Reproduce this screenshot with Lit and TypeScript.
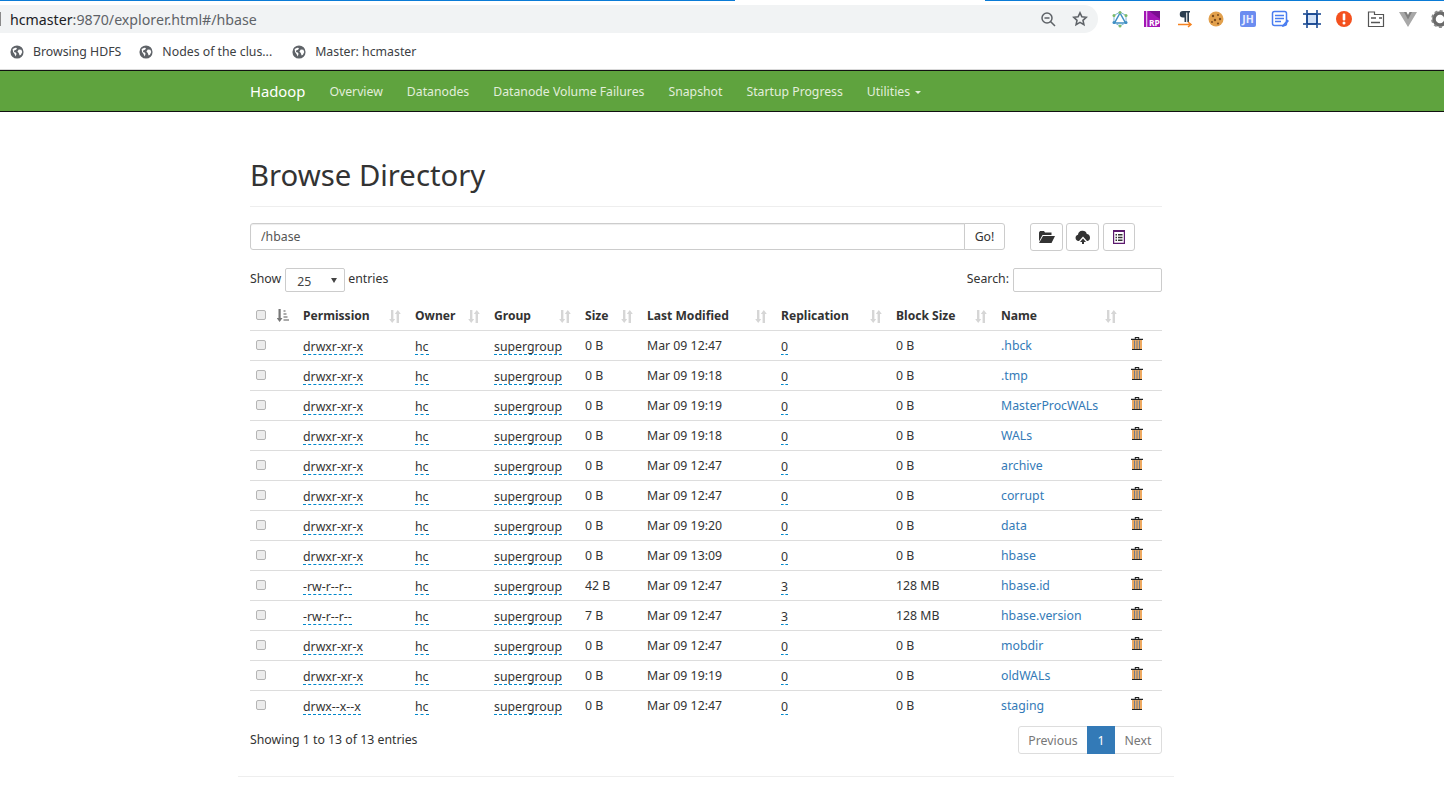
import { LitElement, html, css } from "lit";
import { customElement } from "lit/decorators.js";

type Row = [string, string, string, string, string, string];
const rows: Row[] = [
  ["drwxr-xr-x", "0 B", "Mar 09 12:47", "0", "0 B", ".hbck"],
  ["drwxr-xr-x", "0 B", "Mar 09 19:18", "0", "0 B", ".tmp"],
  ["drwxr-xr-x", "0 B", "Mar 09 19:19", "0", "0 B", "MasterProcWALs"],
  ["drwxr-xr-x", "0 B", "Mar 09 19:18", "0", "0 B", "WALs"],
  ["drwxr-xr-x", "0 B", "Mar 09 12:47", "0", "0 B", "archive"],
  ["drwxr-xr-x", "0 B", "Mar 09 12:47", "0", "0 B", "corrupt"],
  ["drwxr-xr-x", "0 B", "Mar 09 19:20", "0", "0 B", "data"],
  ["drwxr-xr-x", "0 B", "Mar 09 13:09", "0", "0 B", "hbase"],
  ["-rw-r--r--", "42 B", "Mar 09 12:47", "3", "128 MB", "hbase.id"],
  ["-rw-r--r--", "7 B", "Mar 09 12:47", "3", "128 MB", "hbase.version"],
  ["drwxr-xr-x", "0 B", "Mar 09 12:47", "0", "0 B", "mobdir"],
  ["drwxr-xr-x", "0 B", "Mar 09 19:19", "0", "0 B", "oldWALs"],
  ["drwx--x--x", "0 B", "Mar 09 12:47", "0", "0 B", "staging"],
];
const cols = [
  ["Permission", 112],
  ["Owner", 79],
  ["Group", 91],
  ["Size", 62],
  ["Last Modified", 134],
  ["Replication", 115],
  ["Block Size", 105],
  ["Name", 130],
] as [string, number][];

const globe = html`<svg class="globe" viewBox="0 0 16 16"><circle cx="8" cy="8" r="7.500" fill="#5f6368"/><path fill="#fff" d="M3 4.500 6 3l2 .5-1 2-2 .5-.5 2 2 .5 1 1.500-1 3L5 10 3.500 8ZM10 5l3 .5 1 2.500-1.500 3-1.500 1L10 9 8.500 7.500Z"/></svg>`;
const sortIcon = () => html`<svg class="sort" viewBox="0 0 12 13"><path fill="#d6d6d6" d="M2 0h2.400v9H6.200L3.200 13 .2 9H2ZM7.600 13V4H5.800l3-4 3 4H10v9Z"/></svg>`;
const trash = html`<svg class="trash" viewBox="0 0 12 13"><path fill="#eeaa62" d="M1 3h10v9H1Z"/><path fill="#6f7c8c" d="M3 3.500h1V12H3ZM5.500 3.500h1V12h-1ZM8 3.500h1V12H8Z"/><path fill="#222" d="M0 1.800h12V3H0ZM3.800 0h4.400v1.800H7.200V.9H4.800v.9H3.800ZM1 12h10v1H1Z"/></svg>`;

@customElement("app-root")
export class AppRoot extends LitElement {
  static styles = css`
    :host { display: block; position: relative; height: 793px; overflow: hidden; background: #fff; color: #333; font: 12.300px "Noto Sans", "Open Sans", sans-serif; }
    * { box-sizing: border-box; }
    .top { height: 5px; background: linear-gradient(90deg, #0a7bd6 735px, transparent 735px, transparent 985px, #0a7bd6 985px) top / 100% 1px no-repeat; }
    .omni { height: 28px; display: flex; align-items: center; }
    .url { flex: none; width: 1098px; height: 28px; background: #f1f3f4; border-radius: 0 14px 14px 0; display: flex; align-items: center; padding-left: 10px; font-size: 14.200px; color: #5f6368; }
    .url b { font-weight: 400; color: #202124; }
    .caret { position: absolute; left: 0; top: 12px; width: 1px; height: 14px; background: #8a8a8a; }
    .url svg { flex: none; width: 16px; height: 16px; }
    .urltext { flex: 1; }
    .star { margin-left: 16px; margin-right: 10px; }
    .ext { flex: 1; display: flex; gap: 14px; padding-left: 13px; overflow: hidden; }
    .ext svg { flex: none; width: 18px; height: 18px; }
    .bookmarks { height: 37px; display: flex; align-items: center; padding-left: 10px; padding-top: 1px; border-bottom: 1px solid #d9d9d9; font-size: 12.300px; color: #3c4043; }
    .bm { display: flex; align-items: center; gap: 9px; margin-right: 18px; }
    .bm.wide { margin-right: 20px; }
    .globe { width: 14px; height: 14px; }
    .navbar { height: 42px; background: #5fa33e; border-top: 1px solid #111; border-bottom: 1px solid #111; padding-left: 250px; display: flex; align-items: center; color: #e2eedb; font-size: 12.250px; }
    .brand { font-size: 14.800px; color: #fff; margin-right: 24px; }
    .nav { margin-right: 24px; }
    .caretdown { display: inline-block; border: 3px solid transparent; border-top-color: #e2eedb; border-bottom: 0; margin-left: 5px; vertical-align: 2px; }
    .wrap { width: 936px; margin-left: 238px; padding: 0 12px; }
    h1 { margin: 0; height: 95px; padding-top: 43px; border-bottom: 1px solid #eee; font-size: 29.300px; font-weight: 400; line-height: 40px; }
    .path { display: flex; margin-top: 16px; height: 28px; }
    .pathinput { width: 715px; height: 27px; border: 1px solid #ccc; border-radius: 3px 0 0 3px; padding: 0 10px; font: inherit; color: #555; box-shadow: inset 0 1px 1px rgba(0,0,0,.075); }
    .go { width: 41px; height: 27px; margin-left: -1px; background: #fff; border: 1px solid #ccc; border-radius: 0 3px 3px 0; font: inherit; color: #333; padding: 0; }
    .tb { height: 28px; background: #fff; border: 1px solid #ccc; border-radius: 3px; padding: 0; display: flex; align-items: center; justify-content: center; width: 33px; margin-left: 3px; }
    .tb.first { margin-left: 25px; }
    .tb.last { width: 32px; margin-left: 4px; }
    .tb svg { width: 16px; height: 14px; }
    .controls { display: flex; justify-content: space-between; align-items: center; margin-top: 17px; height: 24px; }
    .controls label { display: flex; align-items: center; gap: 3px; padding-bottom: 4px; }
    .select { width: 60px; height: 24px; border: 1px solid #ccc; border-radius: 2px; display: flex; align-items: center; justify-content: space-between; padding: 3px 7px 0 11px; margin: 0 0 -4px 1px; color: #444; background: #fff; }
    .select i { border: 3.500px solid transparent; border-top: 5px solid #444; border-bottom: 0; margin-top: -3px; }
    .search { width: 149px; height: 24px; border: 1px solid #ccc; border-radius: 2px; margin-left: 1px; margin-bottom: -4px; }
    table { border-collapse: collapse; table-layout: fixed; width: 912px; margin-top: 10px; }
    th { height: 28px; font-weight: 700; text-align: left; padding: 0 0 0 8px; position: relative; border-bottom: 1px solid #ddd; font-size: 12.100px; color: #333; }
    td { height: 30px; padding: 0 0 0 8px; border-bottom: 1px solid #ddd; }
    tbody tr:last-child td { border-bottom: 0; }
    th.ck, td.ck { padding-left: 6px; }
    th.sorter { padding-left: 7px; }
    .box { display: block; width: 10px; height: 10px; border: 1px solid #b5b5b5; border-radius: 2px; background: #ececec; margin-top: -2px; }
    td .box { margin-top: 0; }
    th .sort { position: absolute; right: 6px; top: 8px; }
    .sort { display: block; width: 12px; height: 13px; }
    th.sorter .sort { position: static; }
    .ed { display: inline-block; line-height: 15px; vertical-align: -2px; color: #333; border-bottom: 1px dashed #0088cc; }
    .name { color: #337ab7; }
    .trash { display: block; width: 12px; height: 13px; margin-top: -4px; }
    .foot { display: flex; justify-content: space-between; align-items: center; height: 28px; margin-top: 6px; }
    .info { padding-bottom: 2px; }
    .pag { display: flex; height: 28px; border: 1px solid #ddd; border-radius: 3px; color: #777; }
    .pag span { display: flex; align-items: center; justify-content: center; }
    .prev { width: 68px; }
    .cur { width: 28px; background: #337ab7; color: #fff; margin: -1px 0; }
    .next { width: 46px; }
    hr { margin: 22px 0 0 238px; width: 936px; height: 1px; background: #eee; border: 0; }
  `;

  private ext() {
    return html`
      <svg viewBox="0 0 18 18"><path fill="none" stroke="#3f8ec4" stroke-width="1.500" d="M9 3 3.500 13h11Z"/><path fill="none" stroke="#7fb8d8" d="M9 2 15 5.500v7L9 16l-6-3.500v-7Z"/><circle cx="9" cy="2.500" r="1.500" fill="#7dbb6a"/><circle cx="3" cy="5.500" r="1.500" fill="#7dbb6a"/><circle cx="15" cy="5.500" r="1.500" fill="#7dbb6a"/><circle cx="3" cy="12.500" r="1.500" fill="#3f8ec4"/><circle cx="15" cy="12.500" r="1.500" fill="#3f8ec4"/><circle cx="9" cy="16" r="1.500" fill="#7dbb6a"/></svg>
      <svg viewBox="0 0 18 18"><rect x="1" y="1" width="16" height="16" fill="#a315b5"/><path fill="#7a0d90" d="M6 1h11v8Z"/><rect x="3" y="1" width="1.300" height="16" fill="#fff" opacity=".7"/><text x="6" y="15.500" font-size="8.500" font-weight="700" fill="#fff" font-family="Noto Sans">RP</text></svg>
      <svg viewBox="0 0 18 18"><path fill="#2c3e50" d="M8 1h7v1.500h-1V12h-1.700V2.500h-1.100V12H9.500V7.500H8A3.250 3.250 0 0 1 8 1Z"/><path fill="none" stroke="#f58220" stroke-width="1.500" d="M3 14.500h12.500M13 12l3 2.500-3 2.500"/></svg>
      <svg viewBox="0 0 18 18"><circle cx="9" cy="9" r="7.500" fill="#e2a04c"/><g fill="#7a4a1c"><circle cx="6" cy="6" r="1.200"/><circle cx="11" cy="5" r="1"/><circle cx="13" cy="9" r="1.200"/><circle cx="8" cy="10" r="1.200"/><circle cx="5" cy="12" r="1"/><circle cx="11" cy="13.500" r="1.100"/></g></svg>
      <svg viewBox="0 0 18 18"><rect x="1" y="1" width="16" height="16" rx="2" fill="#6b8cf0"/><text x="9" y="13" font-size="10.500" font-weight="700" fill="#e8edff" text-anchor="middle" font-family="Noto Sans">JH</text></svg>
      <svg viewBox="0 0 18 18"><rect x="1.500" y="1.500" width="14" height="14" rx="2" fill="#fff" stroke="#4a7df0" stroke-width="1.500"/><path stroke="#4a7df0" stroke-width="1.300" d="M4 5.500h9M4 8.500h9M4 11.500h6"/><path fill="#4a7df0" d="M16.500 9.500 18 11l-5 5.500-2 .5.500-2Z"/></svg>
      <svg viewBox="0 0 18 18"><rect x="4" y="4" width="10" height="10" fill="#cfe0f7" stroke="#0d3f8c" stroke-width="1.800"/><path stroke="#0d3f8c" stroke-width="1.500" d="M4 0v3M14 0v3M4 15v3M14 15v3M0 4h3M0 14h3M15 4h3M15 14h3"/></svg>
      <svg viewBox="0 0 18 18"><circle cx="9" cy="9" r="8" fill="#f4511e"/><rect x="7.700" y="3.500" width="2.600" height="7" rx="1" fill="#fff"/><circle cx="9" cy="13" r="1.500" fill="#fff"/></svg>
      <svg viewBox="0 0 18 18"><path fill="#fff" stroke="#555" stroke-width="1.200" d="M1.500 4.500V2h6v2.500h9v12h-15Z"/><path stroke="#555" stroke-width="1.500" d="M4 8h5M12 8h3M4 12.500h9"/></svg>
      <svg viewBox="0 0 18 18"><path fill="#a8a8a8" d="M0 2h6l3 5 3-5h6L9 17Z"/><path fill="#7f7f7f" d="M5 2h2.500L9 5l1.500-3H13L9 9.500Z"/></svg>
      <svg viewBox="0 0 18 18"><circle cx="9" cy="9" r="6" fill="none" stroke="#6a6a6a" stroke-width="3.500"/><circle cx="9" cy="9" r="8" fill="none" stroke="#8a8a8a" stroke-width="1.800" stroke-dasharray="3 2.300"/></svg>
    `;
  }

  render() {
    return html`
      <div class="top"></div>
      <div class="omni">
        <div class="url">
          <div class="urltext"><b>hcmaster</b>:9870/explorer.html#/hbase</div>
          <svg viewBox="0 0 16 16"><circle cx="7" cy="7" r="5" fill="none" stroke="#5f6368" stroke-width="1.500"/><path stroke="#5f6368" stroke-width="1.500" d="M4.500 7h5M10.500 10.500 15 15"/></svg>
          <svg class="star" viewBox="0 0 16 16"><path fill="none" stroke="#5f6368" stroke-width="1.600" d="m8 1.800 1.900 4 4.300.5-3.200 3 .9 4.300L8 11.400l-3.900 2.200.9-4.300-3.200-3 4.300-.5Z"/></svg>
        </div>
        <div class="ext">${this.ext()}</div>
      </div>
      <div class="caret"></div>
      <div class="bookmarks">
        <span class="bm">${globe}Browsing HDFS</span>
        <span class="bm wide">${globe}Nodes of the clus...</span>
        <span class="bm">${globe}Master: hcmaster</span>
      </div>
      <nav class="navbar">
        <span class="brand">Hadoop</span>
        <span class="nav">Overview</span>
        <span class="nav">Datanodes</span>
        <span class="nav">Datanode Volume Failures</span>
        <span class="nav">Snapshot</span>
        <span class="nav">Startup Progress</span>
        <span class="nav">Utilities<i class="caretdown"></i></span>
      </nav>
      <div class="wrap">
        <h1>Browse Directory</h1>
        <div class="path">
          <input class="pathinput" .value=${"/hbase"} />
          <button class="go">Go!</button>
          <button class="tb first"><svg viewBox="0 0 16 14"><path fill="#333" d="M0 2.500 1 1h4l1 1.500h6.500V5H3.500L0 11.500ZM4 6h12l-3.500 7H0Z"/></svg></button>
          <button class="tb"><svg viewBox="0 0 16 14"><path fill="#333" d="M4 11H3.500A3.200 3.200 0 0 1 3 4.700 4.500 4.500 0 0 1 11.800 4 3.600 3.600 0 0 1 12.500 11H12L8 6.500ZM8 8.500l3 3.500H9v2H7v-2H5Z"/></svg></button>
          <button class="tb last"><svg viewBox="0 0 16 14"><path fill="#5c1a6e" fill-rule="evenodd" d="M2 0h12v14H2Zm1.200 2v10.800h9.600V2Z"/><path fill="#333" d="M4.500 4H6v1.500H4.500ZM7 4h4.500v1.500H7ZM4.500 6.700H6v1.500H4.500ZM7 6.700h4.500v1.500H7ZM4.500 9.400H6v1.500H4.500ZM7 9.400h4.500v1.500H7Z"/></svg></button>
        </div>
        <div class="controls">
          <label>Show <span class="select">25<i></i></span> entries</label>
          <label>Search: <input class="search" /></label>
        </div>
        <table>
          <colgroup>
            <col style="width:20px" /><col style="width:25px" />
            ${cols.map(c => html`<col style="width:${c[1]}px" />`)}
            <col style="width:39px" />
          </colgroup>
          <thead>
            <tr>
              <th class="ck"><span class="box"></span></th>
              <th class="sorter"><svg class="sort" viewBox="0 0 12 13"><path fill="#777" d="M1.500 0h2.200v9h1.800L2.600 13-.3 9h1.800Z"/><path fill="#aaa" d="M6.500 1h2v2h-2ZM6.500 4h3v2h-3ZM6.500 7h4v2h-4ZM6.500 10H12v2H6.500Z"/></svg></th>
              ${cols.map(c => html`<th>${c[0]}${sortIcon()}</th>`)}
              <th></th>
            </tr>
          </thead>
          <tbody>
            ${rows.map(r => html`
              <tr>
                <td class="ck"><span class="box"></span></td>
                <td></td>
                <td><span class="ed">${r[0]}</span></td>
                <td><span class="ed">hc</span></td>
                <td><span class="ed">supergroup</span></td>
                <td>${r[1]}</td>
                <td>${r[2]}</td>
                <td><span class="ed">${r[3]}</span></td>
                <td>${r[4]}</td>
                <td class="name">${r[5]}</td>
                <td>${trash}</td>
              </tr>`)}
          </tbody>
        </table>
        <div class="foot">
          <span class="info">Showing 1 to 13 of 13 entries</span>
          <div class="pag"><span class="prev">Previous</span><span class="cur">1</span><span class="next">Next</span></div>
        </div>
      </div>
      <hr />
    `;
  }
}
